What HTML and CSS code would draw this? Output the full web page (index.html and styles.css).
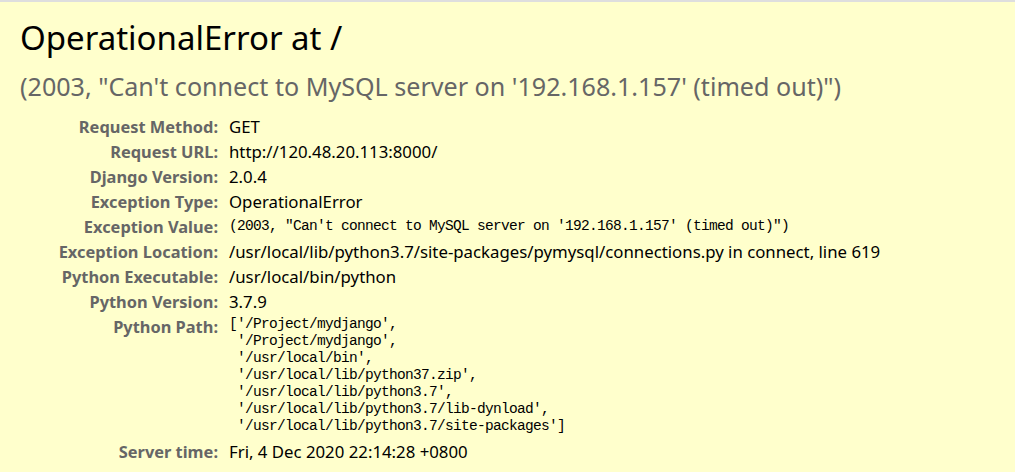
FILE: index.html
```html
<!DOCTYPE html>
<html>
<head>
<meta charset="utf-8">
<title>OperationalError at /</title>
<link rel="stylesheet" href="styles.css">
</head>
<body>
<div class="summary">
  <h1 class="title">OperationalError at /</h1>
  <pre class="exception-value">(2003, "Can't connect to MySQL server on '192.168.1.157' (timed out)")</pre>
  <table class="meta">
    <tr><th>Request Method:</th><td>GET</td></tr>
    <tr><th>Request URL:</th><td>http://120.48.20.113:8000/</td></tr>
    <tr><th>Django Version:</th><td>2.0.4</td></tr>
    <tr><th>Exception Type:</th><td>OperationalError</td></tr>
    <tr><th>Exception Value:</th><td><pre class="mono">(2003, "Can't connect to MySQL server on '192.168.1.157' (timed out)")</pre></td></tr>
    <tr><th>Exception Location:</th><td>/usr/local/lib/python3.7/site-packages/pymysql/connections.py in connect, line 619</td></tr>
    <tr><th>Python Executable:</th><td>/usr/local/bin/python</td></tr>
    <tr><th>Python Version:</th><td>3.7.9</td></tr>
    <tr><th>Python Path:</th><td><pre class="mono path">['/Project/mydjango',
 '/Project/mydjango',
 '/usr/local/bin',
 '/usr/local/lib/python37.zip',
 '/usr/local/lib/python3.7',
 '/usr/local/lib/python3.7/lib-dynload',
 '/usr/local/lib/python3.7/site-packages']</pre></td></tr>
    <tr><th>Server time:</th><td>Fri, 4 Dec 2020 22:14:28 +0800</td></tr>
  </table>
</div>
</body>
</html>
```
FILE: styles.css
```css
html, body {
  margin: 0;
  padding: 0;
}
body {
  background: #ffffcc;
  color: #000;
  font-family: "Noto Sans", "Open Sans", sans-serif;
  font-size: 16px;
}
.summary {
  background: #ffffcc;
  border-top: 2px solid #dedede;
  padding: 12px 20px 20px 20px;
}
.title {
  margin: 0;
  font-weight: normal;
  font-size: 33px;
  line-height: 48px;
}
.exception-value {
  margin: 7px 0 11px 0;
  font-family: "Noto Sans", "Open Sans", sans-serif;
  font-size: 25.1px;
  line-height: 34px;
  color: #666;
  white-space: pre-wrap;
}
.meta {
  border-collapse: collapse;
  border: none;
}
.meta th, .meta td {
  vertical-align: top;
  padding: 2px 3px;
  line-height: 21px;
}
.meta th {
  width: 195px;
  text-align: right;
  color: #666;
  font-weight: bold;
  font-size: 16.4px;
  padding-right: 8px;
  white-space: nowrap;
}
.meta td {
  font-size: 16.8px;
}
.mono {
  margin: 0;
  font-family: "Liberation Mono", "DejaVu Sans Mono", monospace;
  font-size: 14.5px;
  letter-spacing: -0.7px;
}
.path {
  line-height: 17px;
  padding-bottom: 2px;
}
```
